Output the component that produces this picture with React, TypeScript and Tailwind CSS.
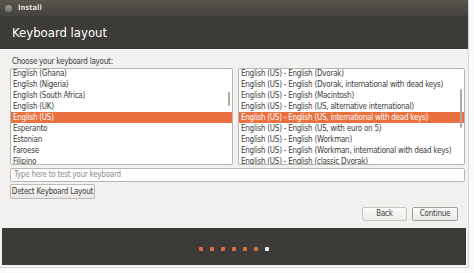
const leftItems = [
  "English (Ghana)",
  "English (Nigeria)",
  "English (South Africa)",
  "English (UK)",
  "English (US)",
  "Esperanto",
  "Estonian",
  "Faroese",
  "Filipino",
];

const rightItems = [
  "English (US) - English (Dvorak)",
  "English (US) - English (Dvorak, international with dead keys)",
  "English (US) - English (Macintosh)",
  "English (US) - English (US, alternative international)",
  "English (US) - English (US, international with dead keys)",
  "English (US) - English (US, with euro on 5)",
  "English (US) - English (Workman)",
  "English (US) - English (Workman, international with dead keys)",
  "English (US) - English (classic Dvorak)",
];

function List({
  items,
  selected,
  thumb,
  className,
}: {
  items: string[];
  selected: number;
  thumb: string;
  className: string;
}) {
  return (
    <div
      className={`relative overflow-hidden rounded-[2px] border border-[#b9b6b0] bg-white ${className}`}
    >
      <div className="-mt-[1px] flex flex-col">
        {items.map((it, i) => (
          <div
            key={it}
            className={
              i === selected
                ? "h-[11px] whitespace-nowrap bg-[#e9703f] pl-[2px] leading-[11px] text-white"
                : "h-[11px] whitespace-nowrap pl-[2px] leading-[11px] text-[#3c3c3c]"
            }
          >
            {it}
          </div>
        ))}
      </div>
      {/* overlay scrollbar */}
      <div className={`absolute right-[2px] w-[2px] rounded bg-[#aeaba6] ${thumb}`} />
    </div>
  );
}

export default function App() {
  return (
    <div
      className="h-[273px] w-[474px] bg-[#fafafa] text-[8px] tracking-[-0.25px]"
      style={{ fontFamily: "'DejaVu Sans Condensed', 'Liberation Sans', sans-serif" }}
    >
      <div className="flex h-[268px] w-[469px] flex-col border-r border-b border-[#d8d6d2] bg-[#f2f1f0]">
        {/* title bar */}
        <div className="flex h-[16px] items-center gap-[6px] bg-gradient-to-b from-[#57544d] to-[#45433e] pl-[5px]">
          <div className="h-[7px] w-[7px] rounded-full bg-gradient-to-b from-[#9a9892] to-[#74726d]" />
          <span className="text-[7.5px] font-bold tracking-normal text-[#dfdbd2]">Install</span>
        </div>
        {/* header */}
        <div className="flex h-[33px] items-center bg-[#3c3b37] pl-[12px]">
          <span className="text-[13px] tracking-normal text-white">Keyboard layout</span>
        </div>
        {/* content */}
        <div className="flex flex-1 flex-col pl-[10px] pr-[3px] pt-[6px]">
          <div className="pl-[2px] leading-[13px] text-[#3c3c3c]">
            Choose your keyboard layout:
          </div>
          <div className="flex h-[97px] gap-[5px]">
            <List items={leftItems} selected={4} thumb="top-[23px] h-[14px]" className="w-[223px]" />
            <List items={rightItems} selected={4} thumb="top-[20px] h-[39px]" className="flex-1" />
          </div>
          <div className="mt-[3px] flex h-[14px] items-center rounded-[2px] border border-[#b9b6b0] bg-white pl-[3px] text-[#8c8c8c]">
            Type here to test your keyboard
          </div>
          <div className="mt-[2px] flex">
            <div className="flex h-[15px] w-[85px] items-center justify-center whitespace-nowrap rounded-[2px] border border-[#bdbab5] bg-gradient-to-b from-[#fbfbfa] to-[#e8e7e5] text-[#3c3c3c]">
              Detect Keyboard Layout
            </div>
          </div>
          <div className="mt-[8px] flex justify-end gap-[5px] pr-[7px]">
            <div className="flex h-[14px] w-[45px] items-center justify-center rounded-[2px] border border-[#c9c6c1] bg-gradient-to-b from-[#fbfbfa] to-[#eceae8] text-[#3c3c3c]">
              Back
            </div>
            <div className="flex h-[14px] w-[46px] items-center justify-center rounded-[2px] border border-[#a09d98] bg-gradient-to-b from-[#fbfbfa] to-[#eceae8] text-[#3c3c3c]">
              Continue
            </div>
          </div>
        </div>
        {/* footer */}
        <div className="mx-[2px] mb-[2px] flex h-[37px] items-center justify-center gap-[7px] bg-[#3c3b37] pt-[4px]">
          {[0, 1, 2, 3, 4, 5].map((i) => (
            <div key={i} className="h-[4px] w-[4px] rounded-[1px] bg-[#dd6b48]" />
          ))}
          <div className="h-[4px] w-[4px] rounded-[1px] bg-[#eeeeec]" />
        </div>
      </div>
    </div>
  );
}
